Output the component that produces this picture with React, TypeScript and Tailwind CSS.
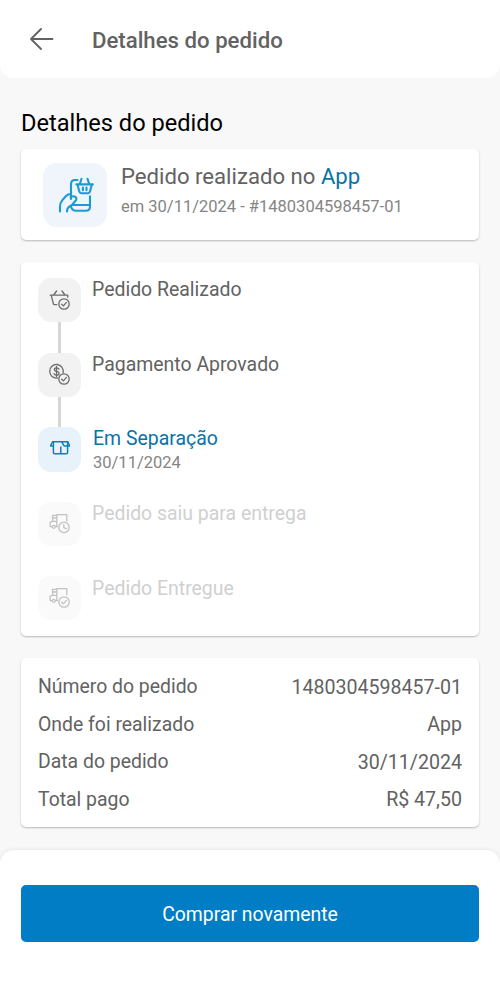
import React from "react";

type StepStatus = "done" | "current" | "pending";
type Step = { label: string; status: StepStatus; date?: string; icon: React.ReactNode };

const Check = () => (
  <>
    <circle cx="26" cy="26" r="5.2" />
    <path d="M23.6 26.2l1.8 1.7 3-3.5" />
  </>
);

const BasketIcon = () => (
  <>
    <path d="M15.6 17l3-4M27 17l-3-4M12.3 17.2h17.4v2M13.3 17.4l2 8.2q.2 1 1.2 1h2.3" />
    <Check />
  </>
);

const CoinIcon = () => (
  <>
    <path d="M19.4 25a6.8 6.8 0 1 1 5.7-5.2" />
    <path d="M21 16.2q-.4-1.4-2.4-1.4c-3 0-3 3.2 0 3.6 3.3.5 3.2 3.9 0 3.9q-2.2 0-2.6-1.6M18.5 13.4v10.2" />
    <Check />
  </>
);

const BoxIcon = () => (
  <g strokeWidth="1.5">
    <path d="M14.7 14.8h15.1l1.6 3.4q.3.8-.5.8h-4q-.9 0-1.3-.8l-1.8-3.4M14.7 14.8l-1.9 3.4q-.4.8.4.8h2" />
    <path d="M15.4 15v10.4q0 1.4 1.4 1.4h11.4q1.4 0 1.4-1.4V15M22.8 20v6.6" />
  </g>
);

const Truck = () => (
  <>
    <path d="M18.8 12.6h10v6.2M18.8 12.6v11M14.4 13.4h4.4M14.6 13.4v6h4.2M14.6 16h4.2M14.6 19.4l-2.4.7v4.5h1.8M17.4 24.6h2.2" />
    <circle cx="15.8" cy="24.8" r="1.5" />
  </>
);

const TruckClockIcon = () => (
  <>
    <Truck />
    <circle cx="26" cy="25.4" r="5.2" />
    <path d="M25.8 22.3v3.4l2.6 1" />
  </>
);

const TruckCheckIcon = () => (
  <>
    <Truck />
    <Check />
  </>
);

const ArrowBack = () => (
  <svg className="h-6 w-6" viewBox="0 0 24 24" fill="none" stroke="#626262" strokeWidth="1.8" strokeLinecap="round" strokeLinejoin="round">
    <path d="M22.5 12H1M11 2L1 12l10 10" />
  </svg>
);

const OrderIcon = () => (
  <svg className="h-16 w-16" viewBox="0 0 64 64" fill="none" stroke="#1b9ad6" strokeWidth="2.1" strokeLinecap="round" strokeLinejoin="round">
    <path d="M34.5 17h-2.3q-4.2 0-4.2 4.2V36" />
    <path d="M47 33.2v10.3q0 4.3-4.3 4.3H33q-4 0-5-4.2M30 42h17" />
    <path d="M17 48.5v-4.7q0-3.7 2.4-6.6l3.6-4.2q1.9-2 5-2" />
    <path d="M27.6 34.4c3.8-2.8 7.4.4 5 3.4l-3.9 4.4q-4.7 1.8-4.7 6.2" />
    <path d="M33.4 21.4h16.4M34.5 21.6l1.8 7q.4 1.6 2 1.6h6.8q1.5 0 1.9-1.6l1.8-7M38.5 15.8l-1.7 5.3M44.5 15.8l1.8 5.3M39.9 24.6v2.6M43.5 24.6v2.6" />
  </svg>
);

const steps: Step[] = [
  { label: "Pedido Realizado", status: "done", icon: <BasketIcon /> },
  { label: "Pagamento Aprovado", status: "done", icon: <CoinIcon /> },
  { label: "Em Separação", status: "current", date: "30/11/2024", icon: <BoxIcon /> },
  { label: "Pedido saiu para entrega", status: "pending", icon: <TruckClockIcon /> },
  { label: "Pedido Entregue", status: "pending", icon: <TruckCheckIcon /> },
];

const rows = [
  { label: "Número do pedido", value: "1480304598457-01" },
  { label: "Onde foi realizado", value: "App" },
  { label: "Data do pedido", value: "30/11/2024" },
  { label: "Total pago", value: "R$ 47,50" },
];

const tileStyle: Record<StepStatus, string> = {
  done: "h-11 bg-[#f2f2f2] text-[#6b6b6b]",
  current: "h-[45px] bg-[#e7f2fa] text-[#1580b0]",
  pending: "h-11 bg-[#fafafa] text-[#c2c2c2]",
};

const labelStyle: Record<StepStatus, string> = {
  done: "pt-px text-[#626262]",
  current: "pl-px pt-px text-[#0b72a6]",
  pending: "pt-[1.5px] text-[#d0d0d0]",
};

const TimelineStep = ({ step, line }: { step: Step; line: boolean }) => {
  return (
    <li className="flex h-[74.6px] gap-[11px]">
      <div className="flex w-[43px] flex-col items-center">
        <div className={`w-[43px] shrink-0 rounded-[13px] ${tileStyle[step.status]}`}>
          <svg className="h-11 w-[43px]" viewBox="0 0 43 44" fill="none" stroke="currentColor" strokeWidth="1.3" strokeLinecap="round" strokeLinejoin="round">
            {step.icon}
          </svg>
        </div>
        {line && <div className="w-[3px] flex-1 bg-[#d6d6d6]" />}
      </div>
      <div className={labelStyle[step.status]}>
        <p className="text-[19.45px] leading-[22px]">{step.label}</p>
        {step.date && <p className="mt-0.5 text-[16.5px] leading-[22px] text-[#858585]">{step.date}</p>}
      </div>
    </li>
  );
};

const Card = ({ className, children }: { className: string; children: React.ReactNode }) => (
  <section className={`rounded-[5px] bg-white shadow-[0_1px_2px_rgba(0,0,0,0.26)] ${className}`}>{children}</section>
);

export default function App() {
  return (
    <div className="flex h-[1000px] w-[500px] flex-col overflow-hidden bg-[#f8f8f8] font-[Roboto,sans-serif] text-[#626262]">
      <header className="flex h-[78px] shrink-0 items-center gap-[38px] rounded-b-[14px] bg-white pl-[30px]">
        <button aria-label="Voltar">
          <ArrowBack />
        </button>
        <h1 className="pt-px text-[22.2px] leading-6 font-medium">Detalhes do pedido</h1>
      </header>

      <main className="flex-1 px-[21px] pt-8">
        <h2 className="h-[39px] text-[23.6px] leading-[26px] text-black">Detalhes do pedido</h2>

        <Card className="flex h-[91px] gap-3.5 pt-3.5 pl-[22px]">
          <div className="h-16 w-16 rounded-[14px] bg-[#eff5fa]">
            <OrderIcon />
          </div>
          <div>
            <p className="text-[22.15px] leading-[26px]">
              Pedido realizado no <span className="text-[#0b72a6]">App</span>
            </p>
            <p className="mt-[7px] text-[16.5px] leading-[22px] text-[#858585]">em 30/11/2024 - #1480304598457-01</p>
          </div>
        </Card>

        <Card className="mt-[22px] h-[374px] pt-4 pl-[17px]">
          <ul>
            {steps.map((step, i) => (
              <TimelineStep key={step.label} step={step} line={i < 2} />
            ))}
          </ul>
        </Card>

        <Card className="mt-[22px] h-[169px] px-[17px] pt-2.5">
          {rows.map((row) => (
            <div key={row.label} className="flex h-[37.5px] items-center justify-between">
              <span className="text-[19.4px]">{row.label}</span>
              <span className="pt-px text-[19.6px]">{row.value}</span>
            </div>
          ))}
        </Card>
      </main>

      <footer className="h-[150px] shrink-0 rounded-t-[14px] bg-white px-[21px] pt-[35px] shadow-[0_0_4px_rgba(0,0,0,0.1)]">
        <button className="h-[57px] w-full rounded-[5px] bg-[#007dc5] pt-0.5 text-[19.4px] text-white">Comprar novamente</button>
      </footer>
    </div>
  );
}
